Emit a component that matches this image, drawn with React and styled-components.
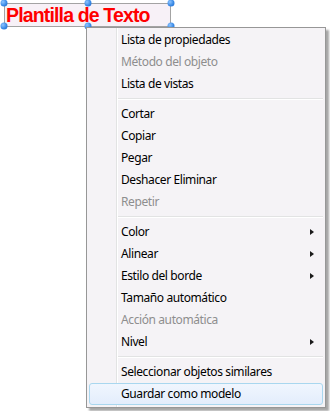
import React from "react";
import styled, { createGlobalStyle, css } from "styled-components";

const Global = createGlobalStyle`
  html, body { margin: 0; padding: 0; background: #ffffff; }
  #root { width: 330px; height: 411px; overflow: hidden; }
`;

const Canvas = styled.div`
  position: relative;
  width: 330px;
  height: 411px;
  background: #ffffff;
  padding: 3px 0 0 4px;
  box-sizing: border-box;
`;

const TextObject = styled.div`
  position: relative;
  width: 167px;
  height: 24px;
  box-sizing: border-box;
  border: 1px solid #a3a3a3;
  background: #f7f1f7;
  padding-left: 1px;
  font-family: "Liberation Sans", Arial, sans-serif;
  font-weight: bold;
  font-size: 19.5px;
  line-height: 22px;
  letter-spacing: -0.85px;
  color: #ff0000;
  white-space: nowrap;
`;

const Handle = styled.span`
  position: absolute;
  width: 7px;
  height: 7px;
  border-radius: 50%;
  background: radial-gradient(circle at 35% 35%, #8ec4ff 0%, #3a8ae6 55%, #1f66c6 100%);
  left: ${(p) => p.$x}px;
  top: ${(p) => p.$y}px;
  transform: translate(-50%, -50%);
`;

const Menu = styled.div`
  position: absolute;
  left: 86px;
  top: 27px;
  width: 240px;
  box-sizing: border-box;
  border: 1px solid #979797;
  padding: 1px 2px 2px 2px;
  background:
    linear-gradient(to right, transparent 29px, #e2e3e3 29px, #e2e3e3 30px, #ffffff 30px, #ffffff 31px, transparent 31px),
    #f5f3f6;
  box-shadow: 3px 3px 2px rgba(0, 0, 0, 0.35);
  font-family: "Noto Sans", "Open Sans", sans-serif;
  font-size: 12px;
  letter-spacing: -0.4px;
  z-index: 2;
`;

const Item = styled.div`
  display: flex;
  align-items: center;
  justify-content: space-between;
  height: 22px;
  box-sizing: border-box;
  padding: 0 8px 0 31px;
  border: 1px solid transparent;
  border-radius: 3px;
  color: ${(p) => (p.$disabled ? "#8e8e8e" : "#000000")};
  white-space: nowrap;
  ${(p) =>
    p.$active &&
    css`
      border-color: #a9d7ef;
      background: linear-gradient(#f0f6fe, #e3edfc);
    `}
`;

const Label = styled.span`
  line-height: 22px;
`;

const Arrow = styled.span`
  width: 0;
  height: 0;
  border-left: 4px solid #1a1a1a;
  border-top: 3.5px solid transparent;
  border-bottom: 3.5px solid transparent;
`;

const Separator = styled.div`
  height: 8px;
  margin-left: 29px;
  display: flex;
  align-items: center;
  &::before {
    content: "";
    flex: 1;
    height: 1px;
    border-bottom: 1px solid #ffffff;
    background: #e2e3e3;
  }
`;

const groups = [
  [
    { t: "Lista de propiedades" },
    { t: "Método del objeto", d: true },
    { t: "Lista de vistas" },
  ],
  [
    { t: "Cortar" },
    { t: "Copiar" },
    { t: "Pegar" },
    { t: "Deshacer Eliminar" },
    { t: "Repetir", d: true },
  ],
  [
    { t: "Color", s: true },
    { t: "Alinear", s: true },
    { t: "Estilo del borde", s: true },
    { t: "Tamaño automático" },
    { t: "Acción automática", d: true },
    { t: "Nivel", s: true },
  ],
  [{ t: "Seleccionar objetos similares" }, { t: "Guardar como modelo", a: true }],
];

export default function App() {
  return (
    <>
      <Global />
      <Canvas>
        <TextObject>
          Plantilla de Texto
          <Handle $x={-1} $y={-1} />
          <Handle $x={83} $y={-1} />
          <Handle $x={166} $y={-1} />
          <Handle $x={-1} $y={22} />
          <Handle $x={83} $y={22} />
          <Handle $x={166} $y={22} />
        </TextObject>
        <Menu>
          {groups.map((g, gi) => (
            <React.Fragment key={gi}>
              {gi > 0 && <Separator />}
              {g.map((it) => (
                <Item key={it.t} $disabled={it.d} $active={it.a}>
                  <Label>{it.t}</Label>
                  {it.s && <Arrow />}
                </Item>
              ))}
            </React.Fragment>
          ))}
        </Menu>
      </Canvas>
    </>
  );
}
